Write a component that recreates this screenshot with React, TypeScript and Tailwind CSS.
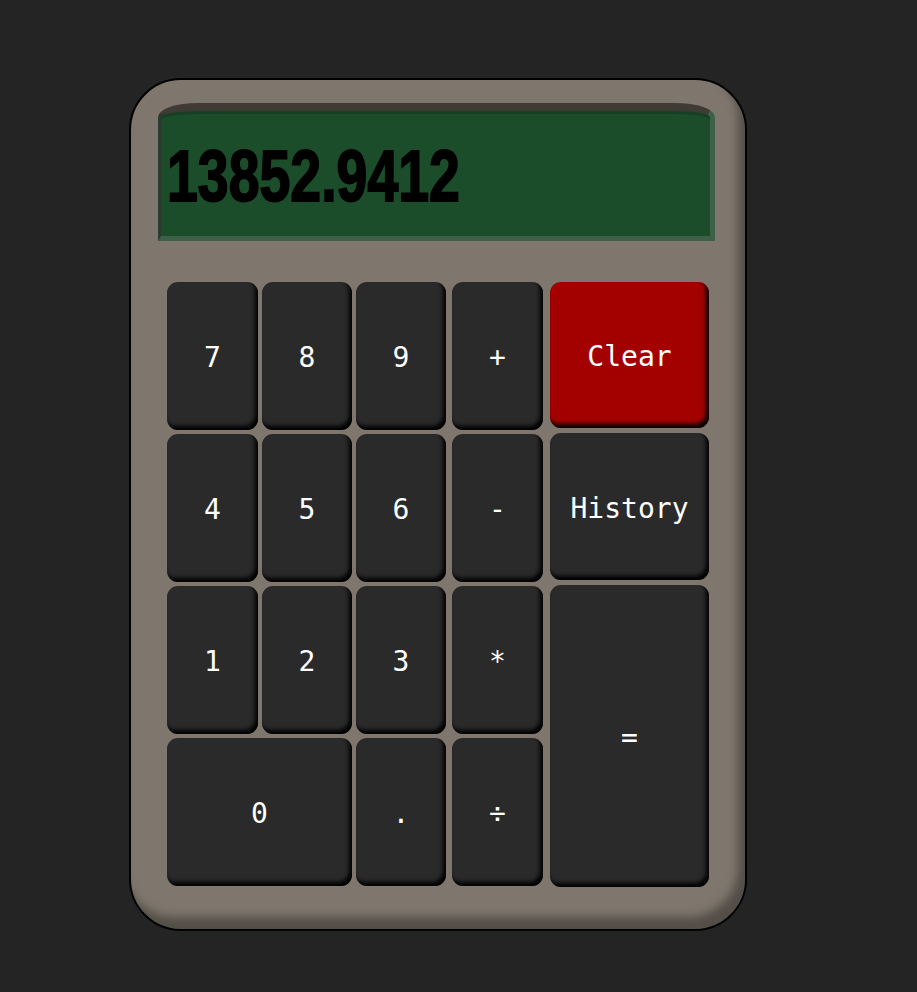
import React from "react";

const key =
  "flex items-center justify-center rounded-[11px] bg-[#2a2a2a] pt-[4px] text-white text-[28px] shadow-[inset_-3px_-4px_4px_#000] [font-family:'DejaVu_Sans_Mono',monospace]";

function Key({ label, className = "" }: { label: string; className?: string }) {
  return <button className={`${key} ${className}`}>{label}</button>;
}

export default function App() {
  const digits = ["7", "8", "9", "4", "5", "6", "1", "2", "3"];
  const ops = ["+", "-", "*", "÷"];

  return (
    <div className="min-h-screen w-full bg-[#242424] pt-[78px] pl-[129px]">
      <div className="flex h-[853px] w-[618px] flex-col rounded-[52px] border-2 border-black bg-[#7f776d] pt-[23px] pl-[27px] shadow-[inset_-7px_-12px_10px_rgba(0,0,0,0.35)]">
        {/* display */}
        <div className="flex h-[138px] w-[557px] items-center overflow-hidden rounded-t-[40px_14px] border-t-[8px] border-l-[3px] border-r-[5px] border-b-[5px] border-t-[#3f3a34] border-l-[#2d3a2f] border-r-[#3f6048] border-b-[#3f6048] bg-[#1b4d2b] pl-[6px] pt-[4px] shadow-[inset_0_3px_0_#163f24]">
          <span className="origin-left scale-x-[0.77] text-[72px] font-bold leading-none text-black [-webkit-text-stroke:2px_black] [font-family:'Liberation_Sans',Arial,sans-serif]">
            13852.9412
          </span>
        </div>

        {/* keypad */}
        <div className="mt-[41px] ml-[9px] flex gap-[6px]">
          <div className="grid grid-cols-[91px_90px_90px] grid-rows-[148px_148px_148px_148px] gap-x-[4px] gap-y-[4px]">
            {digits.map((d) => (
              <Key key={d} label={d} />
            ))}
            <Key label="0" className="col-span-2" />
            <Key label="." />
          </div>
          <div className="grid w-[91px] grid-rows-[148px_148px_148px_148px] gap-y-[4px]">
            {ops.map((o) => (
              <Key key={o} label={o} />
            ))}
          </div>
          <div className="ml-[1px] flex w-[159px] flex-col gap-[5px]">
            <Key label="Clear" className="h-[146px] bg-[#a30000]" />
            <Key label="History" className="h-[147px]" />
            <Key label="=" className="h-[302px]" />
          </div>
        </div>
      </div>
    </div>
  );
}
